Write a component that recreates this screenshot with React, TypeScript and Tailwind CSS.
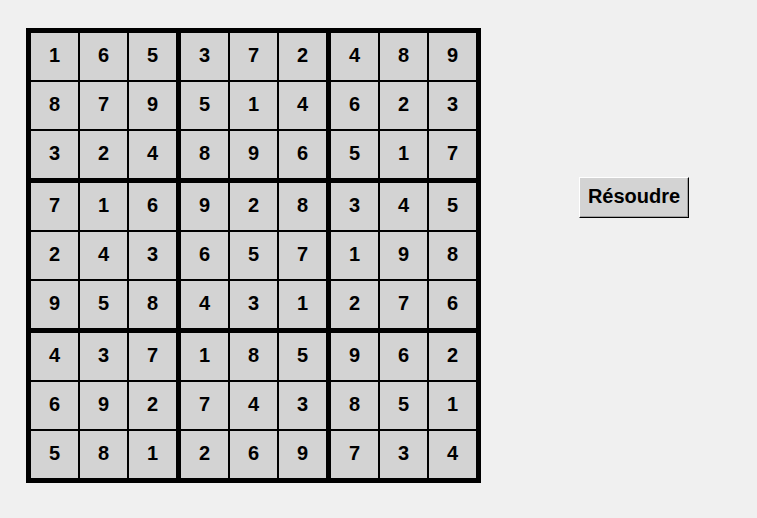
import React from 'react';

const board = [
  [1, 6, 5, 3, 7, 2, 4, 8, 9],
  [8, 7, 9, 5, 1, 4, 6, 2, 3],
  [3, 2, 4, 8, 9, 6, 5, 1, 7],
  [7, 1, 6, 9, 2, 8, 3, 4, 5],
  [2, 4, 3, 6, 5, 7, 1, 9, 8],
  [9, 5, 8, 4, 3, 1, 2, 7, 6],
  [4, 3, 7, 1, 8, 5, 9, 6, 2],
  [6, 9, 2, 7, 4, 3, 8, 5, 1],
  [5, 8, 1, 2, 6, 9, 7, 3, 4],
];

const Block = ({ br, bc }: { br: number; bc: number }) => {
  const cells: number[] = [];
  for (let r = 0; r < 3; r++) {
    for (let c = 0; c < 3; c++) {
      cells.push(board[br * 3 + r][bc * 3 + c]);
    }
  }
  return (
    <div className="grid grid-cols-[repeat(3,47px)] grid-rows-[repeat(3,47px)] gap-[2px]">
      {cells.map((n, i) => (
        <div
          key={i}
          className="flex items-center justify-center pb-[3px] bg-[#d3d3d3] text-[20px] font-bold text-black leading-none"
        >
          {n}
        </div>
      ))}
    </div>
  );
};

export default function App() {
  return (
    <div
      className="flex items-start w-[757px] h-[518px] bg-[#f0f0f0]"
      style={{ fontFamily: '"Liberation Sans", Arial, sans-serif' }}
    >
      <div className="ml-[26px] mt-[28px] bg-black p-[5px]">
        <div className="grid grid-cols-3 gap-[5px]">
          {[0, 1, 2].map((br) =>
            [0, 1, 2].map((bc) => <Block key={`${br}-${bc}`} br={br} bc={bc} />)
          )}
        </div>
      </div>
      <button className="ml-[98px] mt-[177px] w-[110px] h-[41px] pb-[3px] bg-[#d3d3d3] border-t border-l border-white border-r border-b border-r-black border-b-black shadow-[inset_-1px_-1px_0_#a0a0a0] text-[20px] font-bold text-black leading-none">
        Résoudre
      </button>
    </div>
  );
}
